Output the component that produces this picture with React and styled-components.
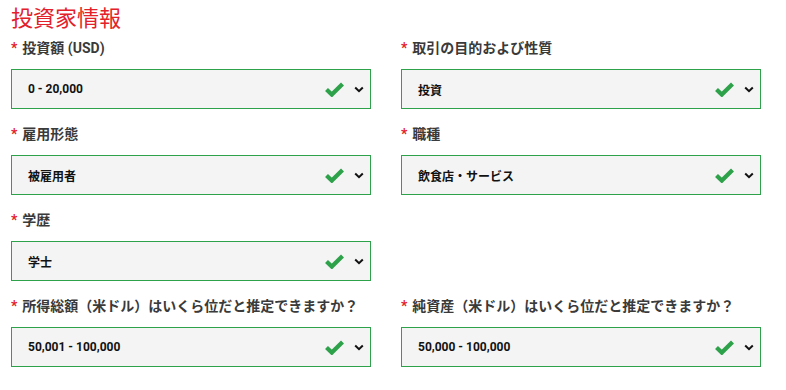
import React from "react";
import styled, { createGlobalStyle } from "styled-components";

const Global = createGlobalStyle`
  body { margin: 0; background: #fff; font-family: Roboto, "Noto Sans CJK JP", sans-serif; }
`;

const Page = styled.div`
  padding: 0 0 0 11px;
`;

const Title = styled.h2`
  margin: 0;
  font-size: 22px;
  line-height: 32px;
  font-weight: 400;
  color: #e3212b;
  font-family: "Noto Sans CJK JP", sans-serif;
`;

const Grid = styled.div`
  display: grid;
  grid-template-columns: 360px 360px;
  column-gap: 30px;
`;

const Field = styled.div`
  padding-top: ${(p) => (p.$first ? 6 : 15)}px;
`;

const Label = styled.div`
  font-size: 14px;
  line-height: 20px;
  font-weight: 700;
  color: #3a3a3a;
  display: flex;
  align-items: center;
  font-family: Roboto, "Noto Sans CJK JP", sans-serif;
`;

const Star = styled.span`
  color: #e3212b;
  margin-right: 5px;
  font-size: 14px;
`;

const Box = styled.div`
  margin-top: 11px;
  height: 40px;
  box-sizing: border-box;
  border: 1px solid #2ea24a;
  background: #f4f4f4;
  display: flex;
  align-items: center;
  padding: 0 6px 0 16px;
  font-size: 12px;
  font-weight: 700;
  color: #111;
`;

const Value = styled.span`
  flex: 1;
`;

const CheckSvg = styled.svg`
  margin-right: 10px;
  display: block;
`;

const Check = () => (
  <CheckSvg width="19" height="15" viewBox="0 0 19 15">
    <polyline
      points="1.5,7.5 6.8,12.6 17.5,2"
      fill="none"
      stroke="#2ea24a"
      strokeWidth="4.2"
      strokeLinejoin="miter"
      strokeLinecap="butt"
    />
  </CheckSvg>
);

const Chevron = () => (
  <svg width="10" height="7" viewBox="0 0 10 7">
    <polyline points="1.2,1.5 5,5.2 8.8,1.5" fill="none" stroke="#111" strokeWidth="2" />
  </svg>
);

const fields = [
  { label: "投資額 (USD)", value: "0 - 20,000" },
  { label: "取引の目的および性質", value: "投資" },
  { label: "雇用形態", value: "被雇用者" },
  { label: "職種", value: "飲食店・サービス" },
  { label: "学歴", value: "学士" },
  null,
  { label: "所得総額（米ドル）はいくら位だと推定できますか？", value: "50,001 - 100,000" },
  { label: "純資産（米ドル）はいくら位だと推定できますか？", value: "50,000 - 100,000" },
];

export default function App() {
  return (
    <>
      <Global />
      <Page>
        <Title>投資家情報</Title>
        <Grid>
          {fields.map((f, i) =>
            f ? (
              <Field key={i} $first={i < 2}>
                <Label>
                  <Star>*</Star>
                  {f.label}
                </Label>
                <Box>
                  <Value>{f.value}</Value>
                  <Check />
                  <Chevron />
                </Box>
              </Field>
            ) : (
              <div key={i} />
            )
          )}
        </Grid>
      </Page>
    </>
  );
}
